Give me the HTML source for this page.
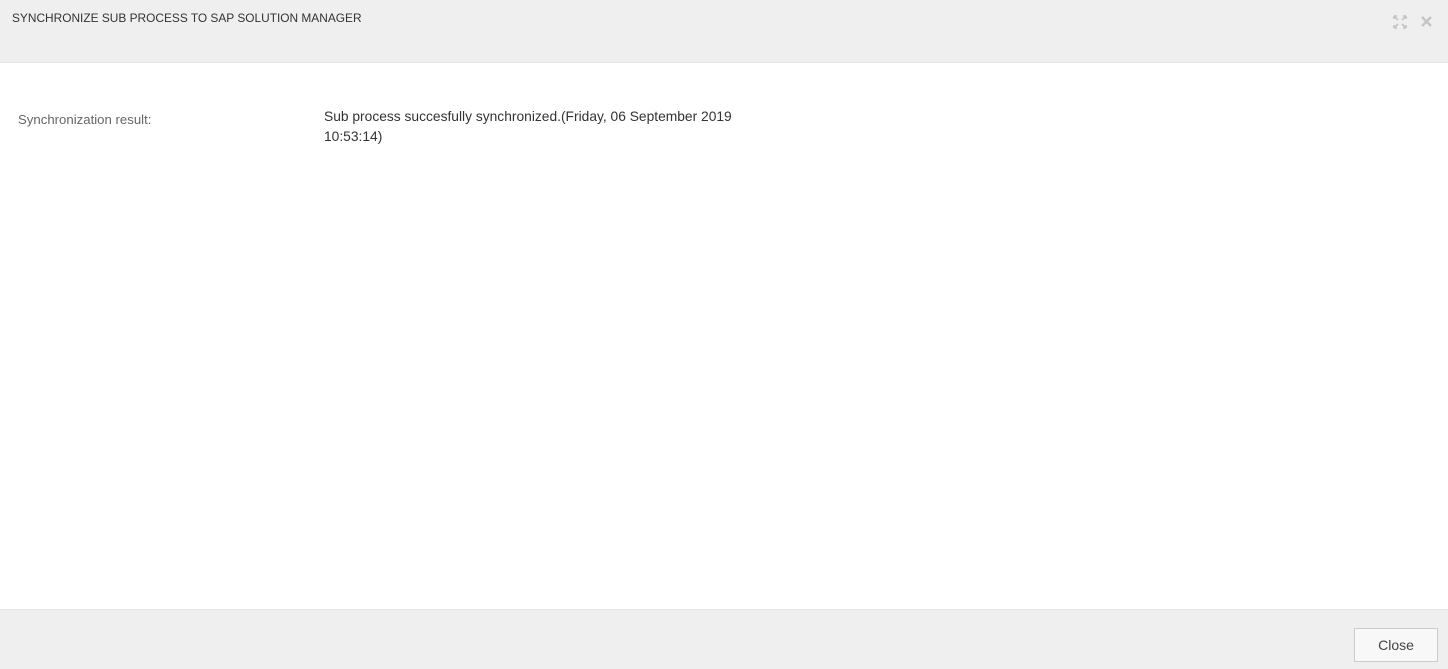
<!DOCTYPE html>
<html><head><style>
body{margin:0;width:1448px;height:668px;background:#fff;font-family:"Segoe UI","Liberation Sans",sans-serif;position:relative;overflow:hidden}
.hd{position:absolute;left:0;top:0;width:1448px;height:62px;background:#efefef;border-bottom:1px solid #e4e4e4}
.t{position:absolute;left:12px;top:11px;font-size:11.9px;color:#333}
.ft{position:absolute;left:0;top:609px;width:1448px;height:59px;background:#efefef;border-top:1px solid #e4e4e4}
.btn{position:absolute;left:1354px;top:628px;width:84px;height:34px;box-sizing:border-box;border:1px solid #ccc;background:#f8f8f8;font-size:14px;color:#444;text-align:center;line-height:32px}
.l{position:absolute;left:18px;top:112px;font-size:13.2px;color:#666}
.v{position:absolute;left:324px;top:107px;font-size:13.8px;color:#333;line-height:20px}
</style></head><body>
<div class="hd"><div class="t">SYNCHRONIZE SUB PROCESS TO SAP SOLUTION MANAGER</div>
<svg style="position:absolute;left:1393px;top:15px" width="14" height="14" viewBox="0 0 14 14" stroke="#c4c4c4" stroke-width="1.6" fill="none"><path d="M1 1l4 4M1 1h3M1 1v3M13 1l-4 4M13 1h-3M13 1v3M1 13l4-4M1 13h3M1 13v-3M13 13l-4-4M13 13h-3M13 13v-3"/></svg>
<svg style="position:absolute;left:1421px;top:16px" width="11" height="11" viewBox="0 0 11 11" stroke="#c4c4c4" stroke-width="2.4"><path d="M1 1l9 9M10 1l-9 9"/></svg>
</div>
<div class="l">Synchronization result:</div>
<div class="v">Sub process succesfully synchronized.(Friday, 06 September 2019<br>10:53:14)</div>
<div class="ft"></div>
<div class="btn">Close</div>
</body></html>
